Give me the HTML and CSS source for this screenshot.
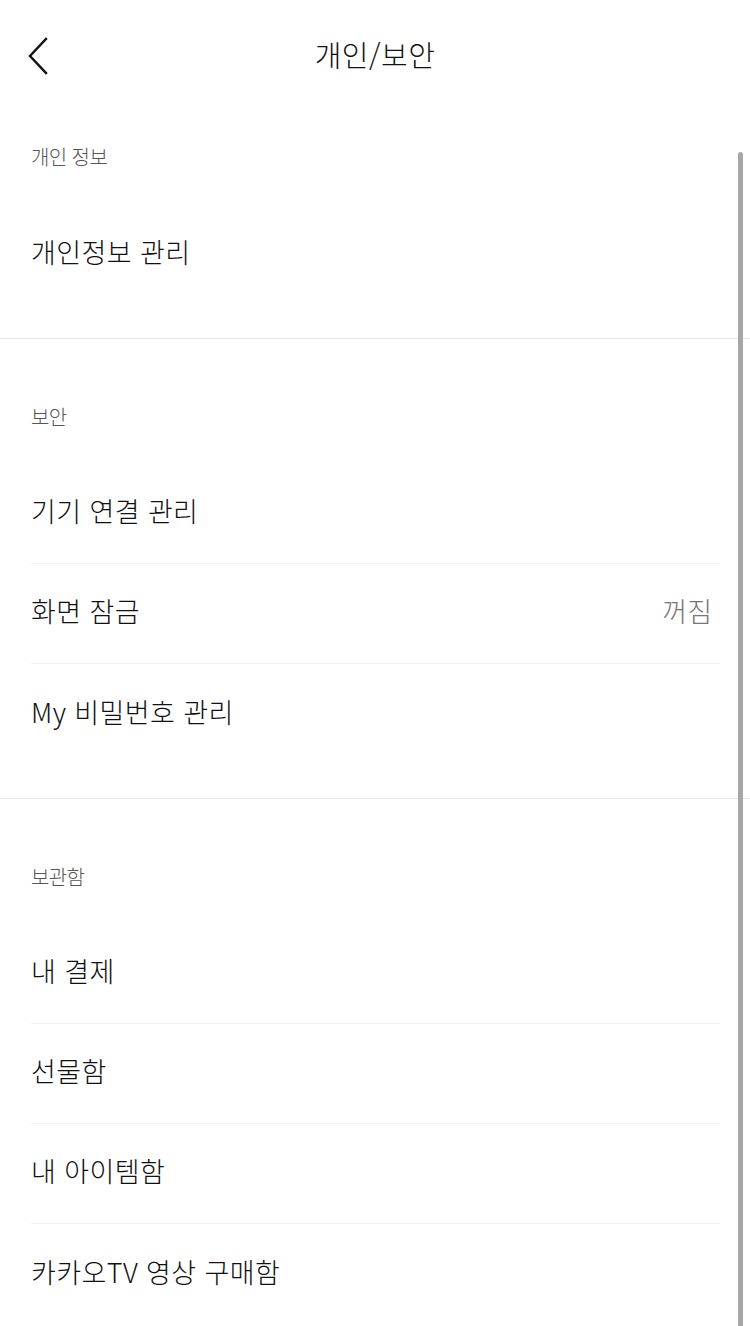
FILE: index.html
```html
<!DOCTYPE html>
<html lang="ko">
<head>
<meta charset="utf-8">
<link rel="stylesheet" href="styles.css">
</head>
<body>
<div class="page">
  <header class="header">
    <svg class="back" width="30" height="40" viewBox="0 0 30 40"><polyline points="19,3 3,20 19,37" fill="none" stroke="#111" stroke-width="2.4" stroke-linecap="square"/></svg>
    <h1 class="title">개인/보안</h1>
  </header>
  <main class="list">
    <section class="section first">
      <div class="label">개인 정보</div>
      <div class="item"><span>개인정보 관리</span></div>
    </section>
    <section class="section">
      <div class="label">보안</div>
      <div class="item"><span>기기 연결 관리</span></div>
      <div class="item"><span>화면 잠금</span><span class="value">꺼짐</span></div>
      <div class="item"><span>My 비밀번호 관리</span></div>
    </section>
    <section class="section">
      <div class="label">보관함</div>
      <div class="item"><span>내 결제</span></div>
      <div class="item"><span>선물함</span></div>
      <div class="item"><span>내 아이템함</span></div>
      <div class="item"><span>카카오TV 영상 구매함</span></div>
    </section>
  </main>
  <div class="scrollbar"></div>
</div>
</body>
</html>
```
FILE: styles.css
```css
* { box-sizing: border-box; }
html, body { margin: 0; padding: 0; background: #fff; }
body {
  font-family: "Noto Sans CJK KR", "Noto Sans", sans-serif;
  color: #111;
  width: 750px;
  height: 1326px;
  overflow: hidden;
}
.page { position: relative; width: 750px; height: 1326px; }
.header {
  position: relative;
  height: 110px;
  display: flex;
  align-items: flex-start;
  justify-content: center;
}
.back { position: absolute; left: 27px; top: 36px; }
.title {
  margin: 0;
  padding-top: 33px;
  font-size: 29px;
  font-weight: 300;
  line-height: 42px;
  letter-spacing: 0.5px;
  color: #111;
}
.section {
  padding: 54px 0 34px;
  border-bottom: 1px solid #e6e6e6;
}
.section.first { padding-top: 23px; }
.section:last-child { border-bottom: none; }
.label {
  height: 48px;
  line-height: 48px;
  padding-left: 31px;
  margin-bottom: 23px;
  font-size: 20px;
  font-weight: 300;
  letter-spacing: -0.6px;
  color: #555;
}
.item {
  height: 100px;
  margin: 0 30px 0 31px;
  padding-bottom: 6px;
  display: flex;
  align-items: center;
  justify-content: space-between;
  font-size: 27px;
  font-weight: 300;
  letter-spacing: 0.4px;
  color: #111;
  border-bottom: 1px solid #f2f2f2;
}
.item:last-child { border-bottom: none; }
.item .value { color: #777; padding-right: 8px; letter-spacing: 0; }
.scrollbar {
  position: absolute;
  left: 738px;
  top: 152px;
  width: 5px;
  height: 1180px;
  border-radius: 3px;
  background: #a6a6a6;
}
```
